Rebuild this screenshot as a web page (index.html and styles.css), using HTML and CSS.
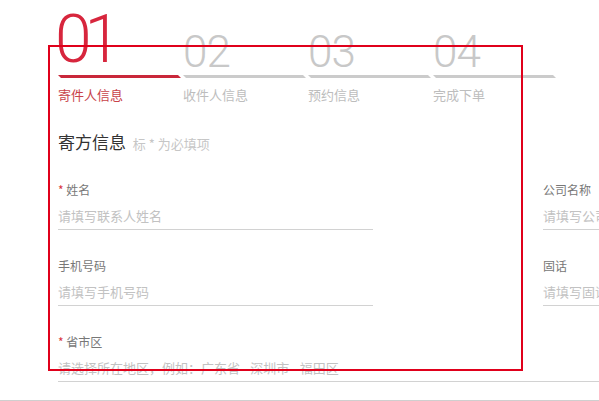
FILE: index.html
```html
<!DOCTYPE html>
<html lang="zh-CN">
<head>
    <meta charset="UTF-8">
    <meta name="viewport" content="width=device-width, initial-scale=1.0">
    <title>寄件</title>

    <link rel="stylesheet" href="styles.css">
</head>
<body>
    <div class="page">
        <div class="steps">
            <div class="step active">
                <div class="step-num">01</div>
                <div class="step-bar"></div>
                <div class="step-label">寄件人信息</div>
            </div>
            <div class="step">
                <div class="step-num">02</div>
                <div class="step-bar"></div>
                <div class="step-label">收件人信息</div>
            </div>
            <div class="step">
                <div class="step-num">03</div>
                <div class="step-bar"></div>
                <div class="step-label">预约信息</div>
            </div>
            <div class="step">
                <div class="step-num">04</div>
                <div class="step-bar"></div>
                <div class="step-label">完成下单</div>
            </div>
        </div>

        <h2 class="section-title">寄方信息 <span class="hint">标 * 为必填项</span></h2>

        <form class="form-grid">
            <div class="field">
                <label for="name"><span class="req">*</span> 姓名</label>
                <input type="text" id="name" placeholder="请填写联系人姓名">
            </div>
            <div class="field">
                <label for="company">公司名称</label>
                <input type="text" id="company" placeholder="请填写公司名称">
            </div>
            <div class="field">
                <label for="mobile">手机号码</label>
                <input type="text" id="mobile" placeholder="请填写手机号码">
            </div>
            <div class="field">
                <label for="tel">固话</label>
                <input type="text" id="tel" placeholder="请填写固话号码">
            </div>
            <div class="field wide">
                <label for="area"><span class="req">*</span> 省市区</label>
                <input type="text" id="area" placeholder="请选择所在地区，例如：广东省 - 深圳市 - 福田区">
            </div>
        </form>
    </div>
    <div class="footer"></div>

    <!-- annotation box -->
    <div class="marker"></div>
</body>
</html>
```

FILE: styles.css
```css
html {
    overflow: hidden;
}

body {
    margin: 0;
    font-family: "Noto Sans CJK SC", "Noto Sans", sans-serif;
    color: #333;
    background: #fff;
}

.page {
    padding-left: 58px;
    width: 900px;
}

.steps {
    display: flex;
}

.step {
    width: 125px;
}

.step-num {
    height: 68px;
    display: flex;
    align-items: flex-end;
    font-family: Roboto, "Liberation Sans", sans-serif;
    font-weight: 300;
    font-size: 44px;
    line-height: 0.7;
    color: #c8c8c8;
    letter-spacing: -1px;
}

.active .step-num {
    margin-left: -3px;
    font-size: 66px;
    line-height: 0.85;
    color: #d7263d;
    letter-spacing: -7px;
}

.step-bar {
    margin-top: 7px;
    width: 123px;
    height: 3px;
    background: #cbcbcb;
    clip-path: polygon(0 0, calc(100% - 3px) 0, 100% 100%, 3px 100%);
}

.active .step-bar {
    background: #c9283a;
}

.step-label {
    margin-top: 8px;
    font-size: 13px;
    line-height: 18px;
    color: #bdbdbd;
}

.active .step-label {
    color: #c8424a;
}

.section-title {
    margin: 27px 0 0;
    font-size: 17px;
    font-weight: normal;
    line-height: 22px;
    color: #333;
}

.hint {
    margin-left: 3px;
    font-size: 13px;
    color: #c6c6c6;
}

.form-grid {
    display: grid;
    grid-template-columns: 315px 315px;
    column-gap: 170px;
    row-gap: 28px;
    margin-top: 27px;
}

.field label {
    display: block;
    font-size: 12px;
    line-height: 16px;
    color: #777;
}

.req {
    color: #d9363e;
}

.field input {
    display: block;
    box-sizing: border-box;
    width: 100%;
    height: 26px;
    margin-top: 6px;
    padding: 0 0 3px;
    border: none;
    border-bottom: 1px solid #d2d2d2;
    font-family: inherit;
    font-size: 13px;
    outline: none;
}

.field input::placeholder {
    color: #c2c2c2;
}

.wide {
    grid-column: 1 / -1;
}

.footer {
    margin-top: 18px;
    border-top: 1px solid #cfcfcf;
    height: 20px;
}

.marker {
    position: absolute;
    left: 48px;
    top: 45px;
    width: 475px;
    height: 326px;
    box-sizing: border-box;
    border: 2px solid #e0001b;
}
```
